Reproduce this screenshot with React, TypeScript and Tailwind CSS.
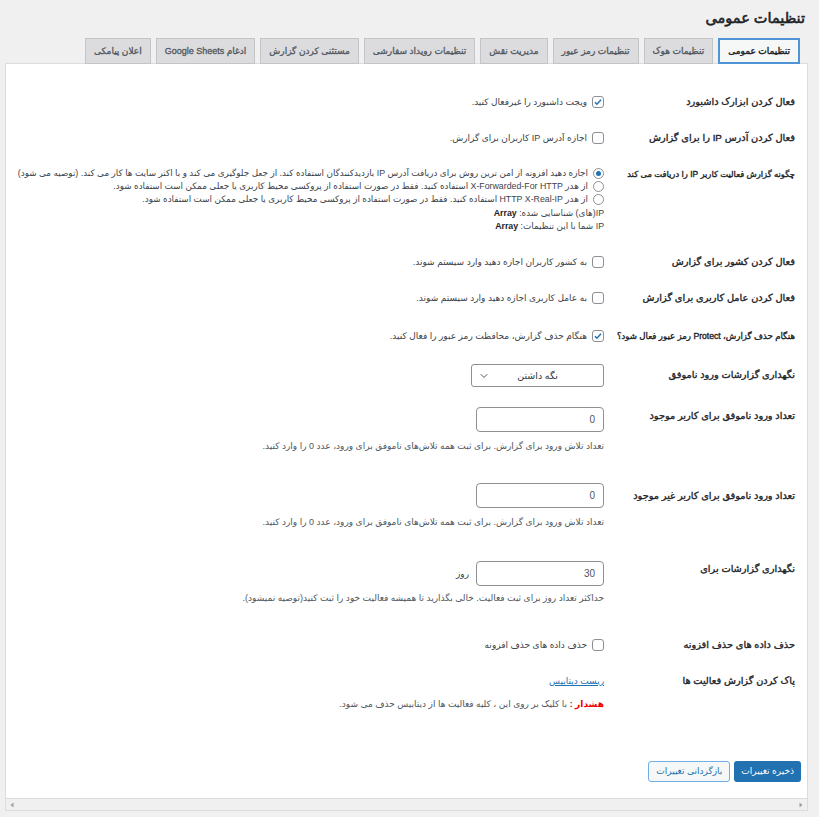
import { ChevronDown } from "lucide-react";
import type { ReactNode } from "react";

const tabs = [
  "تنظیمات عمومی",
  "تنظیمات هوک",
  "تنظیمات رمز عبور",
  "مدیریت نقش",
  "تنظیمات رویداد سفارشی",
  "مستثنی کردن گزارش",
  "ادغام Google Sheets",
  "اعلان پیامکی",
];

const font = { fontFamily: "'Liberation Sans', 'DejaVu Sans', sans-serif" };

function Box({ checked }: { checked?: boolean }) {
  return (
    <span className="grid h-3 w-3 shrink-0 place-items-center rounded-[3px] border border-[#8c8f94] bg-white">
      {checked && (
        <svg viewBox="0 0 12 12" className="h-[10px] w-[10px]">
          <path d="M2.3 6.2l2.4 2.4 4.9-5.2" fill="none" stroke="#2271b1" strokeWidth="1.8" />
        </svg>
      )}
    </span>
  );
}

function Radio({ checked }: { checked?: boolean }) {
  return (
    <span className="grid h-[11px] w-[11px] shrink-0 place-items-center rounded-full border border-[#8c8f94] bg-white">
      {checked && <span className="h-[5px] w-[5px] rounded-full bg-[#2271b1]" />}
    </span>
  );
}

function Row({
  label,
  children,
  className = "py-[11px]",
  labelClass = "text-[9.8px]",
}: {
  label: ReactNode;
  children: ReactNode;
  className?: string;
  labelClass?: string;
}) {
  return (
    <div className={`flex ${className}`}>
      <div
        className={`w-[191px] shrink-0 whitespace-nowrap leading-[14px] text-[#1d2327] [-webkit-text-stroke:0.35px_#1d2327] ${labelClass}`}
      >
        {label}
      </div>
      <div className="min-w-0 flex-1 text-[9px] leading-[14px] text-[#3c434a]">{children}</div>
    </div>
  );
}

function Check({ checked, text }: { checked?: boolean; text: string }) {
  return (
    <label className="flex items-center gap-[5px]">
      <Box checked={checked} />
      <span>{text}</span>
    </label>
  );
}

function NumInput({ value }: { value: string }) {
  return (
    <input
      readOnly
      value={value}
      className="h-[25px] w-[128px] rounded-[4px] border border-[#8c8f94] bg-white px-2 text-[10px] text-[#50575e] outline-none"
    />
  );
}

export default function App() {
  return (
    <div dir="rtl" style={font} className="min-h-[817px] bg-[#f0f0f1] pl-[5px] pr-[11px] pt-[8px]">
      <h1 className="mr-[3px] text-[14.5px] font-normal leading-[20px] text-[#1d2327] [-webkit-text-stroke:0.6px_#1d2327]">
        تنظیمات عمومی
      </h1>

      <div className="mt-[10px] flex gap-[5px] pr-[8px]">
        {tabs.map((t, i) => (
          <div
            key={t}
            className={
              i === 0
                ? "-mb-px h-[26px] whitespace-nowrap border-2 border-[#4f94d4] bg-[#f6f7f7] px-[8px] text-[9px] leading-[22px] text-[#1d2327] [-webkit-text-stroke:0.4px_#1d2327]"
                : "-mb-px h-[26px] whitespace-nowrap border border-[#c3c4c7] bg-[#dcdcde] px-[8px] text-[9px] leading-[24px] text-[#50575e] [-webkit-text-stroke:0.3px_#50575e]"
            }
          >
            {t}
          </div>
        ))}
      </div>

      <div className="border border-[#dcdcde] bg-white">
        <div className="px-[6px] pb-[16px] pt-[20px]">
          <div className="pr-[6px]">
            <Row label="فعال کردن ابزارک داشبورد">
              <Check checked text="ویجت داشبورد را غیرفعال کنید." />
            </Row>
            <Row label="فعال کردن آدرس IP را برای گزارش">
              <Check text="اجازه آدرس IP کاربران برای گزارش." />
            </Row>
            <Row label="چگونه گزارش فعالیت کاربر IP را دریافت می کند" labelClass="text-[8.4px]">
              <div className="text-[8.8px] leading-[13px]">
                <div className="flex items-center gap-[5px] whitespace-nowrap">
                  <Radio checked />
                  <span>
                    اجازه دهید افزونه از امن ترین روش برای دریافت آدرس IP بازدیدکنندگان استفاده کند. از جعل جلوگیری می کند و با اکثر سایت ها کار می کند. (توصیه می شود)
                  </span>
                </div>
                <div className="flex items-center gap-[5px] whitespace-nowrap">
                  <Radio />
                  <span>از هدر X-Forwarded-For HTTP استفاده کنید. فقط در صورت استفاده از پروکسی محیط کاربری یا جعلی ممکن است استفاده شود.</span>
                </div>
                <div className="flex items-center gap-[5px] whitespace-nowrap">
                  <Radio />
                  <span>از هدر HTTP X-Real-IP استفاده کنید. فقط در صورت استفاده از پروکسی محیط کاربری یا جعلی ممکن است استفاده شود.</span>
                </div>
                <div className="mt-px">
                  IP(های) شناسایی شده: <b className="text-[#1d2327]">Array</b>
                </div>
                <div>
                  IP شما با این تنظیمات: <b className="text-[#1d2327]">Array</b>
                </div>
              </div>
            </Row>
            <Row label="فعال کردن کشور برای گزارش">
              <Check text="به کشور کاربران اجازه دهید وارد سیستم شوند." />
            </Row>
            <Row label="فعال کردن عامل کاربری برای گزارش">
              <Check text="به عامل کاربری اجازه دهید وارد سیستم شوند." />
            </Row>
            <Row
              label="هنگام حذف گزارش، Protect رمز عبور فعال شود؟"
              className="pb-[11px] pt-[13px]"
              labelClass="text-[8.6px]"
            >
              <Check checked text="هنگام حذف گزارش، محافظت رمز عبور را فعال کنید." />
            </Row>
            <Row label="نگهداری گزارشات ورود ناموفق" className="py-[10px]" labelClass="pt-[4px] text-[9.8px]">
              <div className="relative flex h-[23px] w-[133px] items-center justify-center rounded-[3px] border border-[#8c8f94] bg-white text-[9.5px] text-[#2c3338]">
                نگه داشتن
                <ChevronDown className="absolute left-[6px] top-[5px] h-3 w-3 text-[#50575e]" strokeWidth={2} />
              </div>
            </Row>
            <Row
              label="تعداد ورود ناموفق برای کاربر موجود"
              className="pb-[20px] pt-[10px]"
              labelClass="pt-[2px] text-[9.8px]"
            >
              <NumInput value="0" />
              <p className="mt-[7px] text-[#50575e]">
                تعداد تلاش ورود برای گزارش. برای ثبت همه تلاش‌های ناموفق برای ورود، عدد 0 را وارد کنید.
              </p>
            </Row>
            <Row
              label="تعداد ورود ناموفق برای کاربر غیر موجود"
              className="pb-[20px] pt-[10px]"
              labelClass="pt-[6px] text-[9.8px]"
            >
              <NumInput value="0" />
              <p className="mt-[7px] text-[#50575e]">
                تعداد تلاش ورود برای گزارش. برای ثبت همه تلاش‌های ناموفق برای ورود، عدد 0 را وارد کنید.
              </p>
            </Row>
            <Row label="نگهداری گزارشات برای" className="pb-[22px] pt-[12px]" labelClass="pt-[1px] text-[9.8px]">
              <div className="flex items-center gap-[7px]">
                <NumInput value="30" />
                <span>روز</span>
              </div>
              <p className="mt-[5px] text-[#50575e]">
                حداکثر تعداد روز برای ثبت فعالیت. خالی بگذارید تا همیشه فعالیت خود را ثبت کنید(توصیه نمیشود).
              </p>
            </Row>
            <Row label="حذف داده های حذف افزونه">
              <Check text="حذف داده های حذف افزونه" />
            </Row>
            <Row label="پاک کردن گزارش فعالیت ها">
              <a className="text-[#2271b1] underline">ریست دیتابیس</a>
              <p className="mt-[9px] text-[#50575e]">
                <b className="text-[#e00]">هشدار :</b> با کلیک بر روی این ، کلیه فعالیت ها از دیتابیس حذف می شود.
              </p>
            </Row>
          </div>

          <div className="mt-[39px] flex gap-[4px]">
            <button className="h-[21px] rounded-[3px] bg-[#2271b1] px-[7px] text-[9px] text-white">ذخیره تغییرات</button>
            <button className="h-[21px] rounded-[3px] border border-[#72aee6] bg-[#f6f7f7] px-[7px] text-[9px] text-[#2271b1]">
              بازگردانی تغییرات
            </button>
          </div>
        </div>
        <div className="flex h-[12px] items-center justify-between border-t border-[#dcdcde] bg-[#f0f0f1] px-[3px]">
          <svg viewBox="0 0 6 6" className="h-[6px] w-[6px]"><path d="M1.5 0.5v5l3-2.5z" fill="#a0a0a0" /></svg>
          <svg viewBox="0 0 6 6" className="h-[6px] w-[6px]"><path d="M4.5 0.5v5l-3-2.5z" fill="#a0a0a0" /></svg>
        </div>
      </div>
    </div>
  );
}
